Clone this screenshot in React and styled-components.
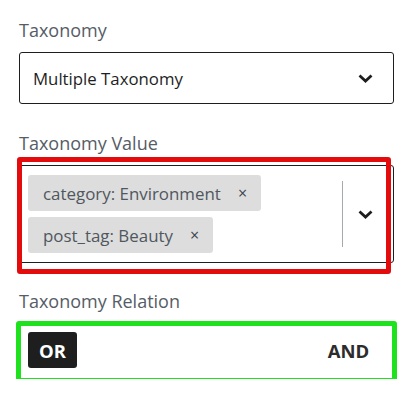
import React from "react";
import styled, { createGlobalStyle } from "styled-components";

const GlobalStyle = createGlobalStyle`
  body {
    margin: 0;
    background: #fff;
    font-family: "Open Sans", "Noto Sans", sans-serif;
  }
`;

const Page = styled.div`
  width: 408px;
  padding: 20px 14px 0 19px;
  box-sizing: border-box;
`;

const Group = styled.div`
  margin-bottom: ${(p) => p.$gap || 0}px;
`;

const Label = styled.div`
  font-size: 18px;
  line-height: 20px;
  color: #555d66;
  margin-bottom: 12px;
`;

const Highlight = styled.div`
  position: relative;

  &::after {
    content: "";
    position: absolute;
    pointer-events: none;
    border: 5px solid ${(p) => p.$color};
    border-radius: 3px;
    top: ${(p) => p.$inset[0]}px;
    right: ${(p) => p.$inset[1]}px;
    bottom: ${(p) => p.$inset[2]}px;
    left: ${(p) => p.$inset[3]}px;
  }
`;

const Select = styled.div`
  display: flex;
  align-items: center;
  height: 52px;
  box-sizing: border-box;
  border: 1px solid #1e1e1e;
  border-radius: 3px;
  padding: 0 20px 0 13px;
  font-size: 16.8px;
  color: #1e1e1e;
`;

const SelectText = styled.span`
  flex: 1;
`;

const MultiSelect = styled.div`
  display: flex;
  align-items: stretch;
  box-sizing: border-box;
  border: 1px solid #1e1e1e;
  border-radius: 3px;
`;

const TagList = styled.div`
  flex: 1;
  display: flex;
  flex-direction: column;
  align-items: flex-start;
  gap: 6px;
  padding: 9px 8px;
`;

const Tag = styled.div`
  display: flex;
  align-items: center;
  height: 36px;
  padding: 0 14px 0 15px;
  background: #dddddd;
  border-radius: 3px;
  font-size: 16.9px;
  color: #50575e;
`;

const Remove = styled.span`
  margin-left: 17px;
  font-size: 16px;
  color: #3c434a;
`;

const Indicator = styled.div`
  display: flex;
  align-items: center;
  padding: 15px 0;
`;

const Separator = styled.div`
  align-self: stretch;
  width: 1px;
  background: #a7aaad;
`;

const ChevronBox = styled.div`
  padding: 0 20px 0 15px;
  display: flex;
  align-items: center;
`;

const Relation = styled.div`
  display: flex;
  align-items: center;
  justify-content: space-between;
  height: 56px;
  box-sizing: border-box;
  padding: 9px 21px 10px 9px;
  border-bottom: 1px solid #50575e;
`;

const Option = styled.span`
  display: inline-flex;
  align-items: center;
  justify-content: center;
  height: 36px;
  min-width: 49px;
  border-radius: 3px;
  background: ${(p) => (p.$active ? "#1e1e1e" : "transparent")};
  color: ${(p) => (p.$active ? "#fff" : "#2c2c2c")};
  font-size: 18.5px;
  font-weight: 700;
`;

const Chevron = () => (
  <svg width="15" height="9" viewBox="0 0 15 9">
    <polyline
      points="1.5,1.5 7.5,7 13.5,1.5"
      fill="none"
      stroke="#1e1e1e"
      strokeWidth="2.8"
    />
  </svg>
);

const tags = ["category: Environment", "post_tag: Beauty"];

export default function App() {
  return (
    <>
      <GlobalStyle />
      <Page>
        <Group $gap={29}>
          <Label>Taxonomy</Label>
          <Select>
            <SelectText>Multiple Taxonomy</SelectText>
            <Chevron />
          </Select>
        </Group>

        <Group $gap={28}>
          <Label>Taxonomy Value</Label>
          <Highlight $color="#e30b0b" $inset={[-8, 3, -11, -2]}>
            <MultiSelect>
              <TagList>
                {tags.map((t) => (
                  <Tag key={t}>
                    {t}
                    <Remove>×</Remove>
                  </Tag>
                ))}
              </TagList>
              <Indicator>
                <Separator />
                <ChevronBox>
                  <Chevron />
                </ChevronBox>
              </Indicator>
            </MultiSelect>
          </Highlight>
        </Group>

        <Group>
          <Label>Taxonomy Relation</Label>
          <Highlight $color="#1ee21e" $inset={[-2, -3, -4, -3]}>
            <Relation>
              <Option $active>OR</Option>
              <Option>AND</Option>
            </Relation>
          </Highlight>
        </Group>
      </Page>
    </>
  );
}
